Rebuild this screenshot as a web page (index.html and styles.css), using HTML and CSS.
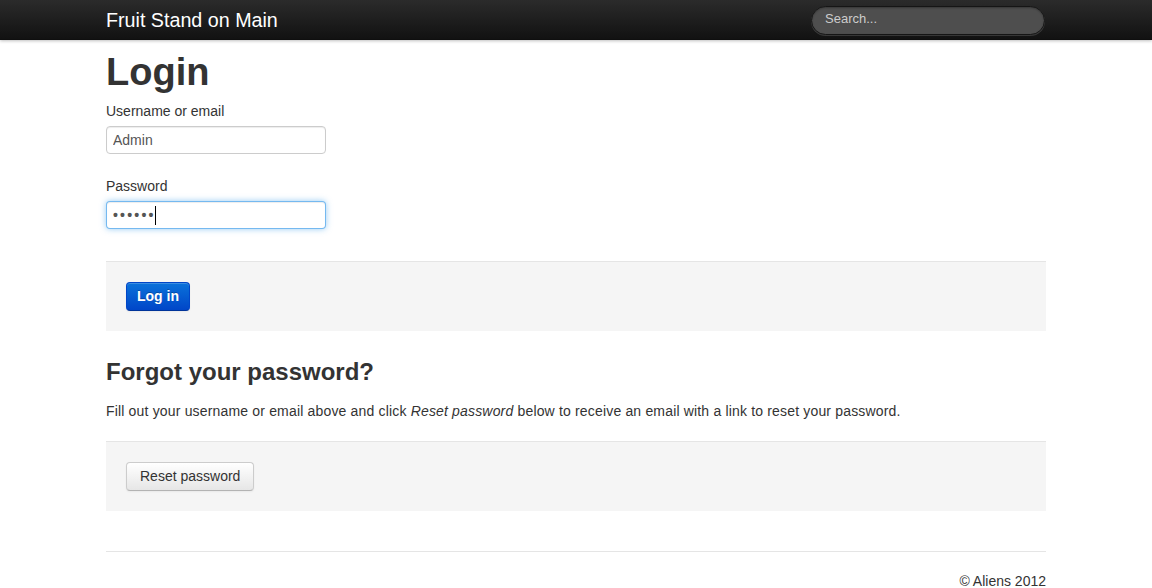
FILE: index.html
```html
<!DOCTYPE html>
<html lang="en">
<head>
<meta charset="utf-8">
<title>Login - Fruit Stand on Main</title>
<link rel="stylesheet" href="styles.css">
</head>
<body>
<header class="navbar">
  <div class="container navbar-row">
    <a class="brand" href="#">Fruit Stand on Main</a>
    <input class="search-query" type="text" placeholder="Search...">
  </div>
</header>
<main class="container">
  <h1 class="title">Login</h1>
  <form class="login-form">
    <label class="control-label" for="user">Username or email</label>
    <input class="text-input" id="user" type="text" value="Admin">
    <label class="control-label label-gap" for="pass">Password</label>
    <div class="field">
      <input class="text-input focused" id="pass" type="password" value="secret">
      <span class="caret-line"></span>
    </div>
    <div class="form-actions actions-first">
      <button class="btn btn-primary" type="button">Log in</button>
    </div>
  </form>
  <h2 class="subtitle">Forgot your password?</h2>
  <p class="help-text">Fill out your username or email above and click <em>Reset password</em> below to receive an email with a link to reset your password.</p>
  <div class="form-actions">
    <button class="btn" type="button">Reset password</button>
  </div>
  <footer class="footer">
    <p class="copyright">© Aliens 2012</p>
  </footer>
</main>
</body>
</html>
```

FILE: styles.css
```css
html, body {
  margin: 0;
  padding: 0;
}

body {
  font-family: "Liberation Sans", Arial, sans-serif;
  font-size: 14px;
  line-height: 18px;
  color: #333333;
  background: #ffffff;
}

.container {
  width: 940px;
  margin: 0 auto;
}

/* Navbar */
.navbar {
  height: 40px;
  background: linear-gradient(#2b2b2b, #111111);
  box-shadow: 0 1px 3px rgba(0, 0, 0, 0.25), inset 0 -1px 0 rgba(0, 0, 0, 0.1);
  position: relative;
  z-index: 2;
}

.navbar-row {
  display: flex;
  justify-content: space-between;
  align-items: flex-start;
  height: 40px;
}

.brand {
  display: block;
  font-size: 19.7px;
  line-height: 20px;
  padding: 10px 0 10px;
  color: #ffffff;
  text-decoration: none;
}

.search-query {
  box-sizing: border-box;
  width: 234px;
  height: 29px;
  margin: 6px 1px 0 0;
  padding: 2px 13px 6px;
  font-family: "Liberation Sans", Arial, sans-serif;
  font-size: 13px;
  color: #ffffff;
  background: #4e4e4e;
  border: 1px solid #151515;
  border-radius: 15px;
  box-shadow: inset 0 1px 2px rgba(0, 0, 0, 0.3), 0 1px 0 rgba(255, 255, 255, 0.15);
  outline: none;
}

.search-query::placeholder {
  color: #cccccc;
}

/* Headings */
.title {
  font-size: 38px;
  line-height: 40px;
  font-weight: bold;
  margin: 12px 0 10px;
  color: #333333;
}

.subtitle {
  font-size: 24px;
  line-height: 36px;
  font-weight: bold;
  margin: 23px 0 0;
  color: #333333;
}

/* Form */
.login-form {
  margin: 0;
}

.control-label {
  display: block;
  margin-bottom: 6px;
}

.label-gap {
  margin-top: 23px;
}

.field {
  position: relative;
  width: 220px;
}

.text-input {
  display: block;
  box-sizing: border-box;
  width: 220px;
  height: 28px;
  padding: 4px 6px;
  font-family: "Liberation Sans", Arial, sans-serif;
  font-size: 14px;
  line-height: 18px;
  color: #555555;
  background: #ffffff;
  border: 1px solid #cccccc;
  border-radius: 4px;
  box-shadow: inset 0 1px 1px rgba(0, 0, 0, 0.075);
  outline: none;
  margin: 0;
}

.text-input.focused {
  border-color: rgba(82, 168, 236, 0.8);
  box-shadow: inset 0 1px 1px rgba(0, 0, 0, 0.075), 0 0 6px rgba(82, 168, 236, 0.6);
  color: #555555;
  letter-spacing: 2.2px;
  font-weight: bold;
}

.caret-line {
  position: absolute;
  left: 49px;
  top: 5px;
  width: 1px;
  height: 19px;
  background: #000000;
}

.form-actions {
  background: #f5f5f5;
  border-top: 1px solid #e5e5e5;
  padding: 20px 20px;
}

.actions-first {
  margin-top: 32px;
}

.help-text {
  margin: 12px 0 21px;
  letter-spacing: 0.17px;
}

/* Buttons */
.btn {
  display: inline-block;
  box-sizing: border-box;
  height: 29px;
  padding: 0 13px;
  font-family: "Liberation Sans", Arial, sans-serif;
  font-size: 14px;
  line-height: 27px;
  color: #333333;
  background: linear-gradient(#ffffff, #e6e6e6);
  border: 1px solid #cccccc;
  border-bottom-color: #b3b3b3;
  border-radius: 4px;
  box-shadow: inset 0 1px 0 rgba(255, 255, 255, 0.2), 0 1px 2px rgba(0, 0, 0, 0.05);
  cursor: pointer;
  margin: 0;
}

.btn-primary {
  padding: 0 10px;
  font-weight: bold;
  color: #ffffff;
  background: linear-gradient(#0a72da, #0046c8);
  border-color: #0046c8 #0046c8 #003399;
  text-shadow: 0 -1px 0 rgba(0, 0, 0, 0.25);
}

/* Footer */
.footer {
  margin-top: 40px;
  border-top: 1px solid #e5e5e5;
  padding-top: 23px;
}

.copyright {
  margin: 0;
  text-align: right;
  line-height: 12px;
}
```
